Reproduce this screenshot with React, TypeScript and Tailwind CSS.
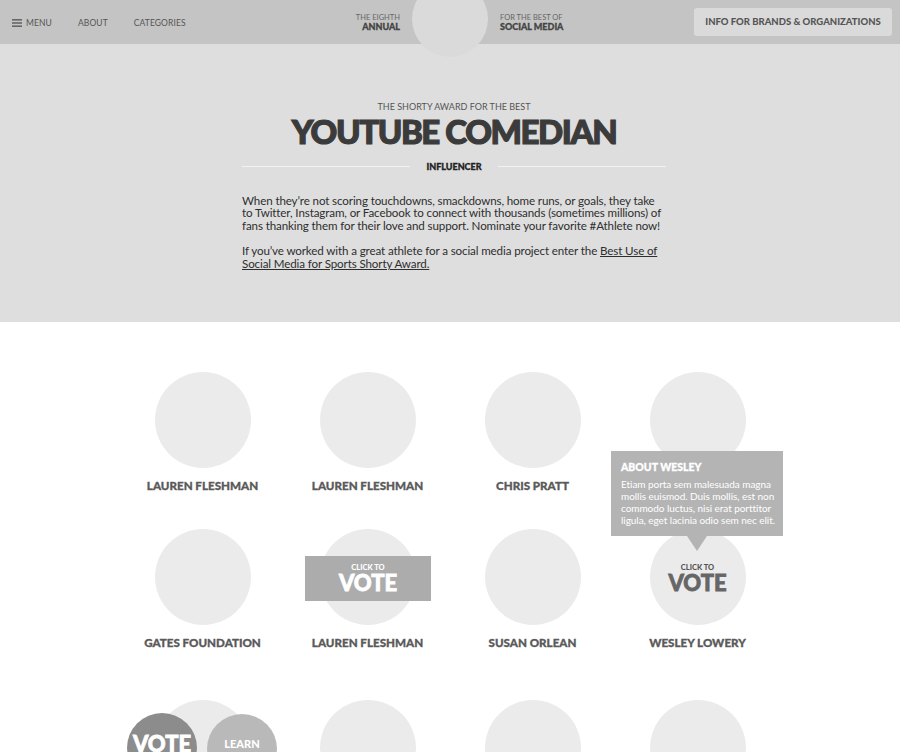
import React from 'react';

const font = { fontFamily: 'Lato, "Open Sans", sans-serif' };

const nominees = [
  'LAUREN FLESHMAN',
  'LAUREN FLESHMAN',
  'CHRIS PRATT',
  'WESLEY LOWERY',
  'GATES FOUNDATION',
  'LAUREN FLESHMAN',
  'SUSAN ORLEAN',
  'WESLEY LOWERY',
];

const aboutLines = [
  'Etiam porta sem malesuada magna',
  'mollis euismod. Duis mollis, est non',
  'commodo luctus, nisi erat porttitor',
  'ligula, eget lacinia odio sem nec elit.',
];

const Header: React.FC = () => (
  <div className="relative z-10 grid h-[44px] grid-cols-[1fr_auto_1fr] items-center bg-[#c4c4c4] text-[#555]">
    <div className="flex items-center gap-[26px] pl-[12px] pt-[2px] text-[8.5px] tracking-[0.1px]">
      <div className="flex items-center gap-[4px]">
        <svg width="10" height="8" viewBox="0 0 10 8">
          <rect y="0" width="10" height="1.6" fill="#666" />
          <rect y="3.2" width="10" height="1.6" fill="#666" />
          <rect y="6.4" width="10" height="1.6" fill="#666" />
        </svg>
        <span>MENU</span>
      </div>
      <span>ABOUT</span>
      <span>CATEGORIES</span>
    </div>
    <div className="flex items-center gap-[12px]">
      <div className="w-[80px] text-right leading-[9px]">
        <div className="text-[7.5px] text-[#666]">THE EIGHTH</div>
        <div className="text-[9px] font-black text-[#444] [-webkit-text-stroke:0.3px_#444]">ANNUAL</div>
      </div>
      <div className="relative h-[44px] w-[76px]">
        <div className="absolute left-0 top-[-19px] h-[76px] w-[76px] rounded-full bg-[#dadada]" />
      </div>
      <div className="w-[80px] leading-[9px]">
        <div className="text-[7.5px] text-[#666]">FOR THE BEST OF</div>
        <div className="text-[9px] font-black text-[#444] [-webkit-text-stroke:0.3px_#444]">SOCIAL MEDIA</div>
      </div>
    </div>
    <div className="flex justify-end pr-[8px]">
      <div className="flex h-[28px] w-[198px] items-center justify-center rounded-[3px] bg-[#dadada] text-[9.5px] font-black text-[#555]">
        INFO FOR BRANDS &amp; ORGANIZATIONS
      </div>
    </div>
  </div>
);

const Hero: React.FC = () => (
  <div className="h-[278px] bg-[#dedede] pt-[58px]">
    <div className="mx-auto w-[424px] translate-x-[4px] text-center">
      <div className="text-[9px] leading-[10px] text-[#555]">THE SHORTY AWARD FOR THE BEST</div>
      <h1 className="mt-[2px] text-[33px] font-black leading-[34px] tracking-[-1.4px] text-[#3b3b3b] [-webkit-text-stroke:1.2px_#3b3b3b]">
        YOUTUBE COMEDIAN
      </h1>
      <div className="mt-[12px] flex items-center gap-[16px]">
        <div className="h-px flex-1 bg-[#f2f2f2]" />
        <span className="text-[9px] font-black text-[#222] [-webkit-text-stroke:0.3px_#222]">INFLUENCER</span>
        <div className="h-px flex-1 bg-[#f2f2f2]" />
      </div>
      <div className="mt-[21px] text-left text-[11.6px] leading-[12.6px] tracking-[-0.12px] text-[#2e2e2e]">
        <p>
          When they’re not scoring touchdowns, smackdowns, home runs, or goals, they take to Twitter, Instagram, or
          Facebook to connect with thousands (sometimes millions) of fans thanking them for their love and support.
          Nominate your favorite #Athlete now!
        </p>
        <p className="mt-[13px]">
          If you’ve worked with a great athlete for a social media project enter the{' '}
          <span className="underline">Best Use of Social Media for Sports Shorty Award.</span>
        </p>
      </div>
    </div>
  </div>
);

const Nominee: React.FC<{ name: string; index: number }> = ({ name, index }) => (
  <div className="relative flex flex-col items-center">
    <div className="relative flex h-24 w-24 flex-col items-center justify-center rounded-full bg-[#ebebeb]">
      {index === 7 && (
        <div className="mt-[4px] flex flex-col items-center text-[#666]">
          <span className="text-[7.5px] font-black leading-[8px] text-[#555]">CLICK TO</span>
          <span className="text-[22px] font-black leading-[22px] [-webkit-text-stroke:0.8px_#666]">VOTE</span>
        </div>
      )}
    </div>
    {index === 5 && (
      <div className="absolute left-[20px] top-[27px] flex h-[45px] w-[126px] flex-col items-center justify-center bg-[#acacac] text-white">
        <span className="text-[7.5px] font-black leading-[8px]">CLICK TO</span>
        <span className="text-[22px] font-black leading-[22px] [-webkit-text-stroke:0.8px_#fff]">VOTE</span>
      </div>
    )}
    {index === 7 && (
      <div className="absolute left-[-4px] top-[-78px] z-10 w-[172px]">
        <div className="h-[85px] bg-[#b4b4b4] pl-[10px] pt-[10px] text-white">
          <div className="text-[10.5px] font-black leading-[13px] [-webkit-text-stroke:0.3px_#fff]">ABOUT WESLEY</div>
          <div className="mt-[4px] whitespace-nowrap text-[10px] leading-[12px] tracking-[-0.05px]">
            {aboutLines.map((l) => (
              <div key={l}>{l}</div>
            ))}
          </div>
        </div>
        <div className="ml-[76px] h-0 w-0 border-x-[10px] border-t-[15px] border-x-transparent border-t-[#b4b4b4]" />
      </div>
    )}
    <div className="mt-[11px] text-[11.6px] font-black leading-[14px] text-[#5a5a5a] [-webkit-text-stroke:0.3px_#5a5a5a]">
      {name}
    </div>
  </div>
);

const App: React.FC = () => (
  <div className="min-h-screen bg-white" style={font}>
    <Header />
    <Hero />
    <div className="mx-auto grid w-[660px] grid-cols-4 gap-y-[36px] pt-[50px]">
      {nominees.map((n, i) => (
        <Nominee key={i} name={n} index={i} />
      ))}
      <div className="relative mt-[14px] flex justify-center">
        <div className="h-24 w-24 rounded-full bg-[#ebebeb]" />
        <div className="absolute left-[7px] top-[13px] flex h-[70px] w-[70px] justify-center rounded-full bg-[#8c8c8c] pt-[20px] text-[22px] font-black leading-[22px] text-white [-webkit-text-stroke:0.8px_#fff]">
          VOTE
        </div>
        <div className="absolute left-[87px] top-[14px] flex h-[70px] w-[70px] justify-center rounded-full bg-[#b9b9b9] pt-[24px] text-[11px] font-black leading-[12px] text-white">
          LEARN
        </div>
      </div>
      <div className="mt-[14px] flex justify-center">
        <div className="h-24 w-24 rounded-full bg-[#ebebeb]" />
      </div>
      <div className="mt-[14px] flex justify-center">
        <div className="h-24 w-24 rounded-full bg-[#ebebeb]" />
      </div>
      <div className="mt-[14px] flex justify-center">
        <div className="h-24 w-24 rounded-full bg-[#ebebeb]" />
      </div>
    </div>
  </div>
);

export default App;
